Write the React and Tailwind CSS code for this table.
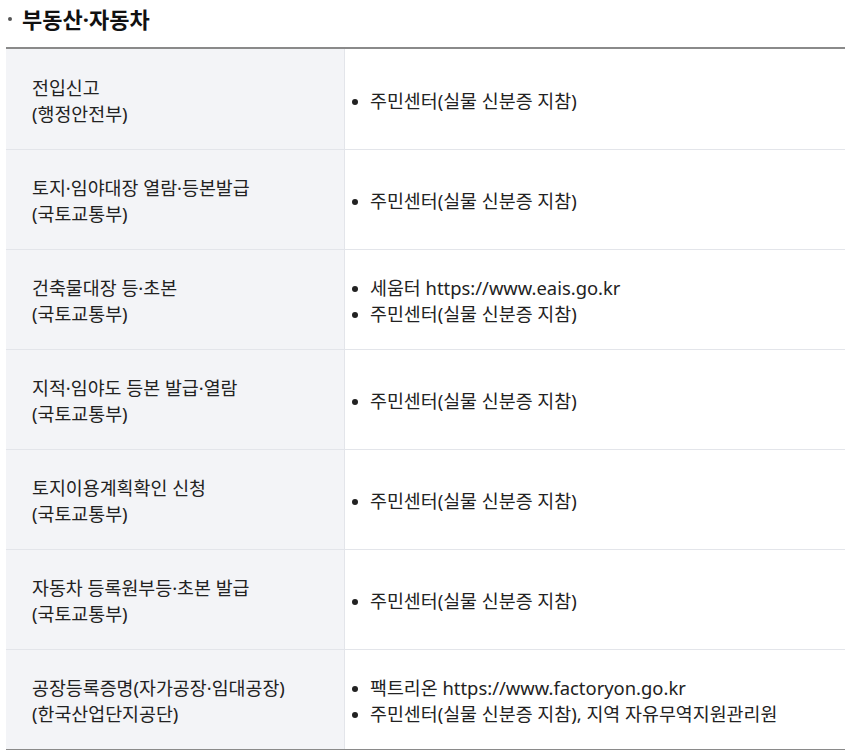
const rows = [
  { title: '전입신고', org: '(행정안전부)', items: ['주민센터(실물 신분증 지참)'] },
  { title: '토지·임야대장 열람·등본발급', org: '(국토교통부)', items: ['주민센터(실물 신분증 지참)'] },
  { title: '건축물대장 등·초본', org: '(국토교통부)', items: ['세움터 https://www.eais.go.kr', '주민센터(실물 신분증 지참)'] },
  { title: '지적·임야도 등본 발급·열람', org: '(국토교통부)', items: ['주민센터(실물 신분증 지참)'] },
  { title: '토지이용계획확인 신청', org: '(국토교통부)', items: ['주민센터(실물 신분증 지참)'] },
  { title: '자동차 등록원부등·초본 발급', org: '(국토교통부)', items: ['주민센터(실물 신분증 지참)'] },
  {
    title: '공장등록증명(자가공장·임대공장)',
    org: '(한국산업단지공단)',
    items: ['팩트리온 https://www.factoryon.go.kr', '주민센터(실물 신분증 지참), 지역 자유무역지원관리원'],
  },
];

export default function App() {
  return (
    <div className="bg-white pl-[6px] text-[#222] font-['Noto_Sans','Noto_Sans_CJK_KR',sans-serif]">
      <h2 className="flex items-start h-[47px] pt-[5px] text-[22px] leading-[28px] font-bold text-[#111]">
        <span className="flex items-center w-[16px] h-[28px]">
          <span className="ml-[2px] w-[4px] h-[4px] rounded-full bg-[#555]" />
        </span>
        부동산·자동차
      </h2>
      <div className="border-t-[2px] border-b-[2px] border-[#8a8a8a]">
        {rows.map((row, i) => (
          <div
            key={i}
            className={`flex h-[100px] ${i > 0 ? 'border-t border-[#e3e5ea]' : ''}`}
          >
            <div className="w-[339px] shrink-0 bg-[#f3f4f7] border-r border-[#e3e5ea] flex flex-col justify-center pt-[3px] pl-[26px] text-[18.4px] leading-[26px]">
              <div>{row.title}</div>
              <div>{row.org}</div>
            </div>
            <div className="flex-1 flex items-center pt-[3px] pl-[6px]">
              <ul className="text-[18.4px] leading-[26px]">
                {row.items.map((t, j) => (
                  <li key={j} className="flex items-center">
                    <span className="w-[19px] shrink-0 flex pt-[2px]">
                      <span className="ml-[1px] w-[6px] h-[6px] rounded-full bg-[#222]" />
                    </span>
                    <span>{t}</span>
                  </li>
                ))}
              </ul>
            </div>
          </div>
        ))}
      </div>
    </div>
  );
}
